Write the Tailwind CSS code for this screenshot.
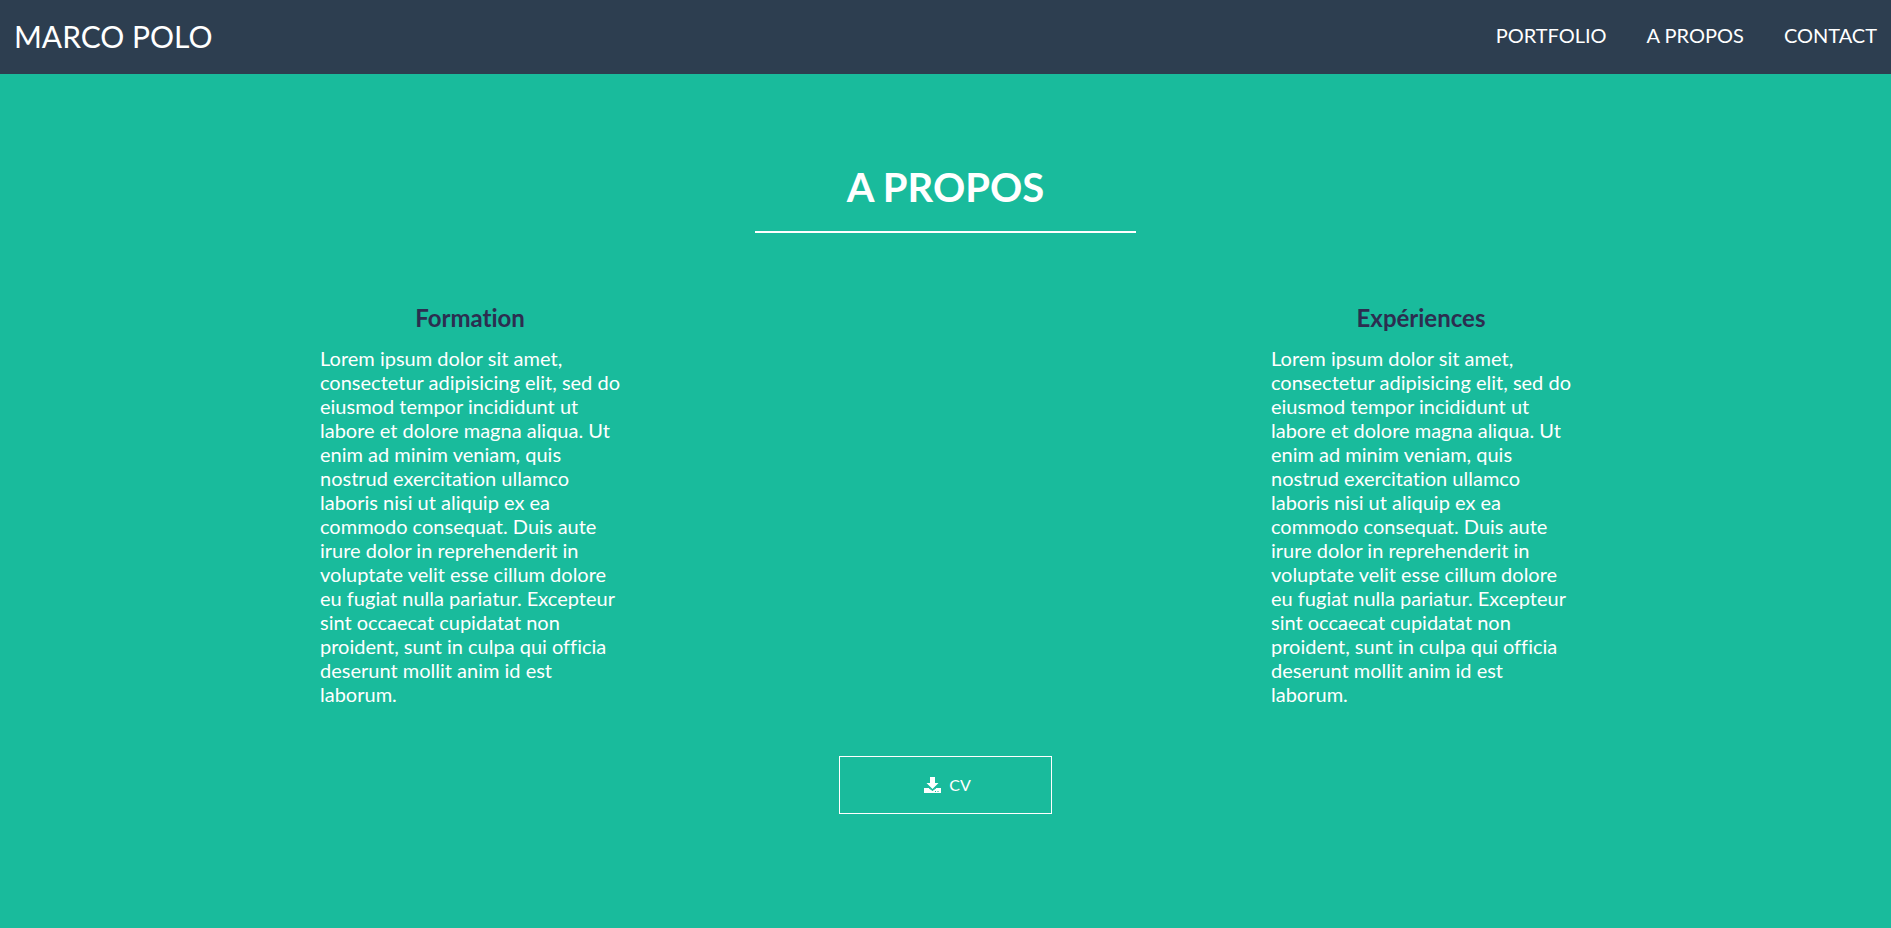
<!DOCTYPE html>
<html lang="fr">
<head>
<meta charset="utf-8">
<meta name="viewport" content="width=device-width, initial-scale=1">
<title>Marco Polo</title>
<script src="https://cdn.jsdelivr.net/npm/@tailwindcss/browser@4"></script>
</head>
<body class="min-h-screen bg-[#19bb9c] font-[Lato,sans-serif] text-xl leading-6 text-white [font-variant-ligatures:none]">
<header class="flex items-start justify-between bg-[#2d3e50] px-3.5 pt-[18px] pb-5">
  <a href="#" class="text-[30px] leading-9">MARCO POLO</a>
  <nav class="flex gap-10 pt-[5px]">
    <a href="#portfolio">PORTFOLIO</a>
    <a href="#propos">A PROPOS</a>
    <a href="#contact">CONTACT</a>
  </nav>
</header>
<main id="propos" class="flex flex-col items-center pt-[89px]">
  <h1 class="w-[381px] border-b-2 border-white pb-5 text-center text-[40px] leading-12 font-bold">A PROPOS</h1>
  <div class="flex w-full justify-between px-[320px] pt-[71px]">
    <section class="w-[300px]">
      <h2 class="mb-3.5 text-center text-2xl leading-7 font-bold text-[#2c2e50]">Formation</h2>
      <p>Lorem ipsum dolor sit amet, consectetur adipisicing elit, sed do eiusmod tempor incididunt ut labore et dolore magna aliqua. Ut enim ad minim veniam, quis nostrud exercitation ullamco laboris nisi ut aliquip ex ea commodo consequat. Duis aute irure dolor in reprehenderit in voluptate velit esse cillum dolore eu fugiat nulla pariatur. Excepteur sint occaecat cupidatat non proident, sunt in culpa qui officia deserunt mollit anim id est laborum.</p>
    </section>
    <section class="w-[300px]">
      <h2 class="mb-3.5 text-center text-2xl leading-7 font-bold text-[#2c2e50]">Expériences</h2>
      <p>Lorem ipsum dolor sit amet, consectetur adipisicing elit, sed do eiusmod tempor incididunt ut labore et dolore magna aliqua. Ut enim ad minim veniam, quis nostrud exercitation ullamco laboris nisi ut aliquip ex ea commodo consequat. Duis aute irure dolor in reprehenderit in voluptate velit esse cillum dolore eu fugiat nulla pariatur. Excepteur sint occaecat cupidatat non proident, sunt in culpa qui officia deserunt mollit anim id est laborum.</p>
    </section>
  </div>
  <button type="button" class="mt-[50px] flex h-[58px] w-[213px] items-center justify-center gap-2 border border-white pl-1 text-base">
    <svg class="h-4 w-[17px]" viewBox="0 0 17 16" fill="currentColor" aria-hidden="true"><path d="M6 0h5v6h3.5L8.5 12 2.500 6H6zM0 11h5.500l3 2.500L11.500 11H17v5H0z"/><path fill="#19bb9c" d="M11 14h1v1h-1zM13.500 14h1v1h-1zM5 10.500L8.500 13 12 10.500V11.500L8.500 14 5 11.500z"/></svg>
    CV
  </button>
</main>
</body>
</html>
